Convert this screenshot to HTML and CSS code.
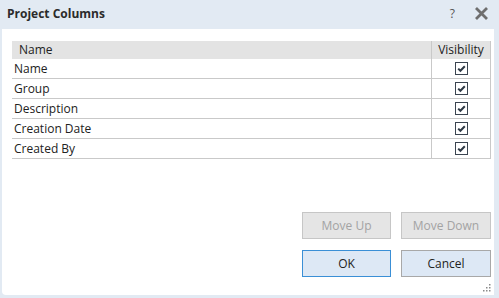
FILE: index.html
```html
<!DOCTYPE html>
<html lang="en">
<head>
  <meta charset="UTF-8" />
  <title>Project Columns</title>
  <link rel="stylesheet" href="styles.css">
</head>
<body>
  <div class="dialog">
    <div class="titlebar">
      <span class="title">Project Columns</span>
      <span class="help">?</span>
      <span class="close">
        <svg width="15" height="13" viewBox="0 0 15 13">
          <path d="M2 1 L13 12 M13 1 L2 12" stroke="#6e6e6e" stroke-width="2.8" fill="none"/>
        </svg>
      </span>
    </div>

    <div class="content">
      <table class="columns">
        <thead>
          <tr>
            <th class="col-name">Name</th>
            <th class="col-vis">Visibility</th>
          </tr>
        </thead>
        <tbody id="rows"></tbody>
      </table>

      <div class="buttons">
        <button class="btn" disabled>Move Up</button>
        <button class="btn" disabled>Move Down</button>
        <button class="btn primary">OK</button>
        <button class="btn">Cancel</button>
      </div>

      <svg class="grip" width="9" height="9" viewBox="0 0 9 9">
        <rect x="7" y="1" width="1.5" height="1.5" fill="#8a8a8a"/>
        <rect x="4" y="4" width="1.5" height="1.5" fill="#8a8a8a"/>
        <rect x="7" y="4" width="1.5" height="1.5" fill="#8a8a8a"/>
        <rect x="1" y="7" width="1.5" height="1.5" fill="#8a8a8a"/>
        <rect x="4" y="7" width="1.5" height="1.5" fill="#8a8a8a"/>
        <rect x="7" y="7" width="1.5" height="1.5" fill="#8a8a8a"/>
      </svg>
    </div>
  </div>

  <script>
    const columns = ["Name", "Group", "Description", "Creation Date", "Created By"];
    const rows = document.getElementById("rows");

    // 체크된 상태로 행 생성
    for (const name of columns) {
      const tr = document.createElement("tr");
      tr.innerHTML =
        '<td class="col-name">' + name + '</td>' +
        '<td class="col-vis"><span class="check">' +
        '<svg width="11" height="11" viewBox="0 0 11 11"><path d="M2.2 5.6 L4.4 7.8 L8.8 3.2" stroke="#2f3a46" stroke-width="2" fill="none"/></svg>' +
        '</span></td>';
      rows.appendChild(tr);
    }
  </script>
</body>
</html>
```

FILE: styles.css
```css
body {
  margin: 0;
  width: 499px;
  height: 298px;
  background: #e2eaf3;
  font-family: 'Open Sans', 'Noto Sans', sans-serif;
  font-size: 12px;
  color: #222;
  overflow: hidden;
}

.dialog {
  display: flex;
  flex-direction: column;
  height: 298px;
}

.titlebar {
  height: 29px;
  display: flex;
  align-items: center;
  padding: 0 0 0 7px;
}

.title {
  font-weight: bold;
  flex: 1;
  color: #2b2b2b;
  margin-top: -2px;
}

.help {
  color: #555;
  font-size: 12px;
  margin-right: 19px;
  margin-top: -2px;
}

.close {
  display: flex;
  margin-right: 10px;
  margin-top: -2px;
}

.content {
  position: relative;
  flex: 1;
  background: #fff;
  margin: 0 5px 3px 2px;
  border-radius: 0 0 0 4px;
  padding: 12px 3px 0 10px;
  display: flex;
  flex-direction: column;
}

.columns {
  border-collapse: collapse;
  width: 100%;
}

.columns th {
  background: #e3e3e3;
  font-weight: normal;
  text-align: left;
  height: 18px;
  padding: 0;
  line-height: 18px;
}

.columns th.col-name {
  padding-left: 7px;
}

.columns th.col-vis {
  border-left: 1px solid #c9c9c9;
  border-right: 1px solid #c9c9c9;
  text-align: center;
  width: 58px;
}

.columns td {
  height: 19px;
  padding: 0 0 0 2px;
  border-bottom: 1px solid #c9c9c9;
  line-height: 19px;
}

.columns td.col-vis {
  border-left: 1px solid #c9c9c9;
  border-right: 1px solid #c9c9c9;
  text-align: center;
  padding: 0;
}

.check {
  display: inline-block;
  width: 11px;
  height: 11px;
  border: 1px solid #3a4450;
  vertical-align: middle;
  margin-top: -2px;
}

.check svg {
  display: block;
}

.buttons {
  margin-top: auto;
  margin-bottom: 18px;
  display: grid;
  grid-template-columns: 89px 90px;
  column-gap: 10px;
  row-gap: 11px;
  justify-content: end;
}

.btn {
  height: 27px;
  font-family: 'Open Sans', 'Noto Sans', sans-serif;
  font-size: 12px;
  color: #222;
  background: #dde8f5;
  border: 1px solid #a8a8a8;
  padding: 0;
}

.btn:disabled {
  background: #e5e5e5;
  border-color: #c6c6c6;
  color: #a3a3a3;
}

.btn.primary {
  border-color: #3a8fd6;
}

.grip {
  position: absolute;
  right: 3px;
  bottom: 3px;
}
```
